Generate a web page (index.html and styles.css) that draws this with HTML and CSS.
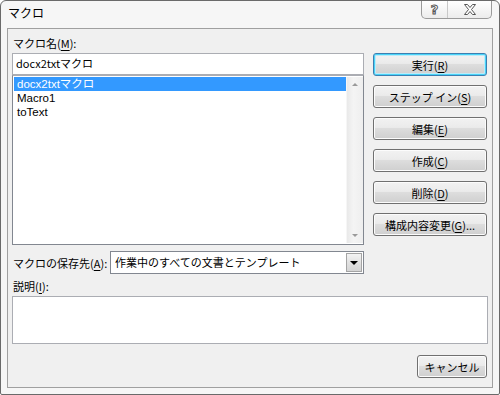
FILE: index.html
```html
<!DOCTYPE html>
<html lang="ja">
<head>
<meta charset="utf-8">
<title>マクロ</title>
<link rel="stylesheet" href="styles.css">
</head>
<body>
<div class="window">
  <div class="titlebar">
    <span class="title">マクロ</span>
    <div class="caption-btns">
      <div class="cap-btn help"><span>?</span></div>
      <div class="cap-btn close">
        <svg width="14" height="11" viewBox="0 0 14 11"><path d="M1.5 0.5h3l2.5 3 2.5-3h3l-4 5 4 5h-3l-2.5-3-2.5 3h-3l4-5z" fill="#fff" stroke="#555" stroke-width="1" stroke-linejoin="round"/></svg>
      </div>
    </div>
  </div>
  <div class="panel">
    <div class="top">
      <div class="left">
        <div class="label">マクロ名(<u>M</u>):</div>
        <div class="input">docx2txtマクロ</div>
        <div class="list">
          <div class="items">
            <div class="item selected">docx2txtマクロ</div>
            <div class="item">Macro1</div>
            <div class="item">toText</div>
          </div>
          <div class="scrollbar">
            <span class="arrow up"></span>
            <span class="arrow down"></span>
          </div>
        </div>
        <div class="combo-row">
          <div class="label">マクロの保存先(<u>A</u>):</div>
          <div class="combo">
            <div class="combo-text">作業中のすべての文書とテンプレート</div>
            <div class="combo-btn"><span class="tri"></span></div>
          </div>
        </div>
      </div>
      <div class="right">
        <div class="btn default">実行(<u>R</u>)</div>
        <div class="btn">ステップ イン(<u>S</u>)</div>
        <div class="btn">編集(<u>E</u>)</div>
        <div class="btn">作成(<u>C</u>)</div>
        <div class="btn">削除(<u>D</u>)</div>
        <div class="btn">構成内容変更(<u>G</u>)...</div>
      </div>
    </div>
    <div class="label desc-label">説明(<u>I</u>):</div>
    <div class="desc"></div>
    <div class="footer">
      <div class="btn cancel">キャンセル</div>
    </div>
  </div>
</div>
</body>
</html>
```

FILE: styles.css
```css
* { box-sizing: border-box; }
html, body { margin: 0; padding: 0; background: #ffffff; }
body {
  font-family: "Noto Sans CJK JP", "Noto Sans", sans-serif;
  font-size: 11px;
  color: #000;
}
.window {
  width: 500px;
  height: 395px;
  border: 1px solid #6a6a6a;
  border-radius: 6px 6px 2px 2px;
  background: #f6f6f6;
  padding: 0 6px 6px 6px;
  display: flex;
  flex-direction: column;
}
.titlebar {
  height: 27px;
  display: flex;
  justify-content: space-between;
  align-items: flex-start;
}
.title {
  font-size: 12px;
  line-height: 22px;
  margin-top: 1px;
  margin-left: 1px;
}
.caption-btns {
  display: flex;
  height: 18px;
  margin-right: 1px;
  border: 1px solid #9a9a9a;
  border-top: none;
  border-radius: 0 0 5px 5px;
  background: linear-gradient(#ffffff, #ececec);
  overflow: hidden;
}
.cap-btn {
  display: flex;
  align-items: center;
  justify-content: center;
}
.cap-btn.help {
  width: 26px;
  border-right: 1px solid #c8c8c8;
  font-family: "DejaVu Sans", sans-serif;
  font-size: 13px;
  font-weight: bold;
  color: #fff;
  -webkit-text-stroke: 1px #555;
}
.cap-btn.close { width: 43px; }
.panel {
  flex: 1;
  border: 1px solid #a0a0a0;
  background: #f0f0f0;
  padding: 6px 5px 0 4px;
  display: flex;
  flex-direction: column;
}
.top {
  display: flex;
  gap: 9px;
}
.left {
  width: 352px;
  display: flex;
  flex-direction: column;
}
.label {
  height: 16px;
  line-height: 16px;
  padding-left: 1px;
  white-space: nowrap;
}
.label u { text-underline-offset: 2px; }
.input {
  margin-top: 2px;
  height: 22px;
  border: 1px solid #abadb3;
  background: #fff;
  padding-left: 3px;
  line-height: 19px;
}
.list {
  height: 170px;
  border: 1px solid #828790;
  border-top-color: #abadb3;
  background: #fff;
  display: flex;
  padding: 1px 0 1px 1px;
}
.items {
  flex: 1;
  font-family: "Liberation Sans", "Noto Sans CJK JP", sans-serif;
  font-size: 11.5px;
}
.item {
  height: 14px;
  line-height: 14px;
  padding-left: 3px;
}
.item.selected {
  background: #3399ff;
  color: #fff;
}
.scrollbar {
  width: 17px;
  background: linear-gradient(90deg, #e9e9e9, #f4f4f4 40%, #eeeeee);
  border-left: 1px solid #f6f6f6;
  display: flex;
  flex-direction: column;
  justify-content: space-between;
  align-items: center;
  padding: 6px 0 6px 0;
}
.arrow {
  width: 0;
  height: 0;
  border-left: 3px solid transparent;
  border-right: 3px solid transparent;
}
.arrow.up { border-bottom: 3px solid #9a9a9a; }
.arrow.down { border-top: 3px solid #9a9a9a; }
.combo-row {
  margin-top: 6px;
  height: 23px;
  display: flex;
  align-items: center;
}
.combo-row .label { width: 98px; }
.combo {
  flex: 1;
  height: 23px;
  border: 1px solid #828790;
  background: #fff;
  display: flex;
}
.combo-text {
  flex: 1;
  padding-left: 4px;
  line-height: 20px;
}
.combo-btn {
  width: 16px;
  margin: 1px;
  border: 1px solid #a4a4a4;
  background: linear-gradient(#f3f3f3, #e2e2e2 50%, #d5d5d5);
  display: flex;
  align-items: center;
  justify-content: center;
}
.tri {
  width: 0;
  height: 0;
  border-left: 4px solid transparent;
  border-right: 4px solid transparent;
  border-top: 4px solid #000;
}
.right {
  width: 114px;
  padding-top: 18px;
  display: flex;
  flex-direction: column;
  gap: 9px;
}
.btn {
  height: 23px;
  border: 1px solid #707070;
  border-radius: 3px;
  background: linear-gradient(#f2f2f2 0%, #ebebeb 45%, #dddddd 50%, #cfcfcf 100%);
  box-shadow: inset 0 0 0 1px #fcfcfc;
  display: flex;
  align-items: center;
  justify-content: center;
  white-space: nowrap;
  line-height: 16px;
}
.btn u { text-underline-offset: 2px; }
.btn.default {
  border-color: #3c7fb1;
  box-shadow: inset 0 0 0 1px #48d3f8, inset 0 0 0 2px #bdeaf8;
}
.desc-label { margin-top: 4px; }
.desc {
  margin-top: 2px;
  height: 48px;
  width: 476px;
  border: 1px solid #abadb3;
  background: #fff;
}
.footer {
  margin-top: 11px;
  display: flex;
  justify-content: flex-end;
}
.btn.cancel { width: 70px; }
```
